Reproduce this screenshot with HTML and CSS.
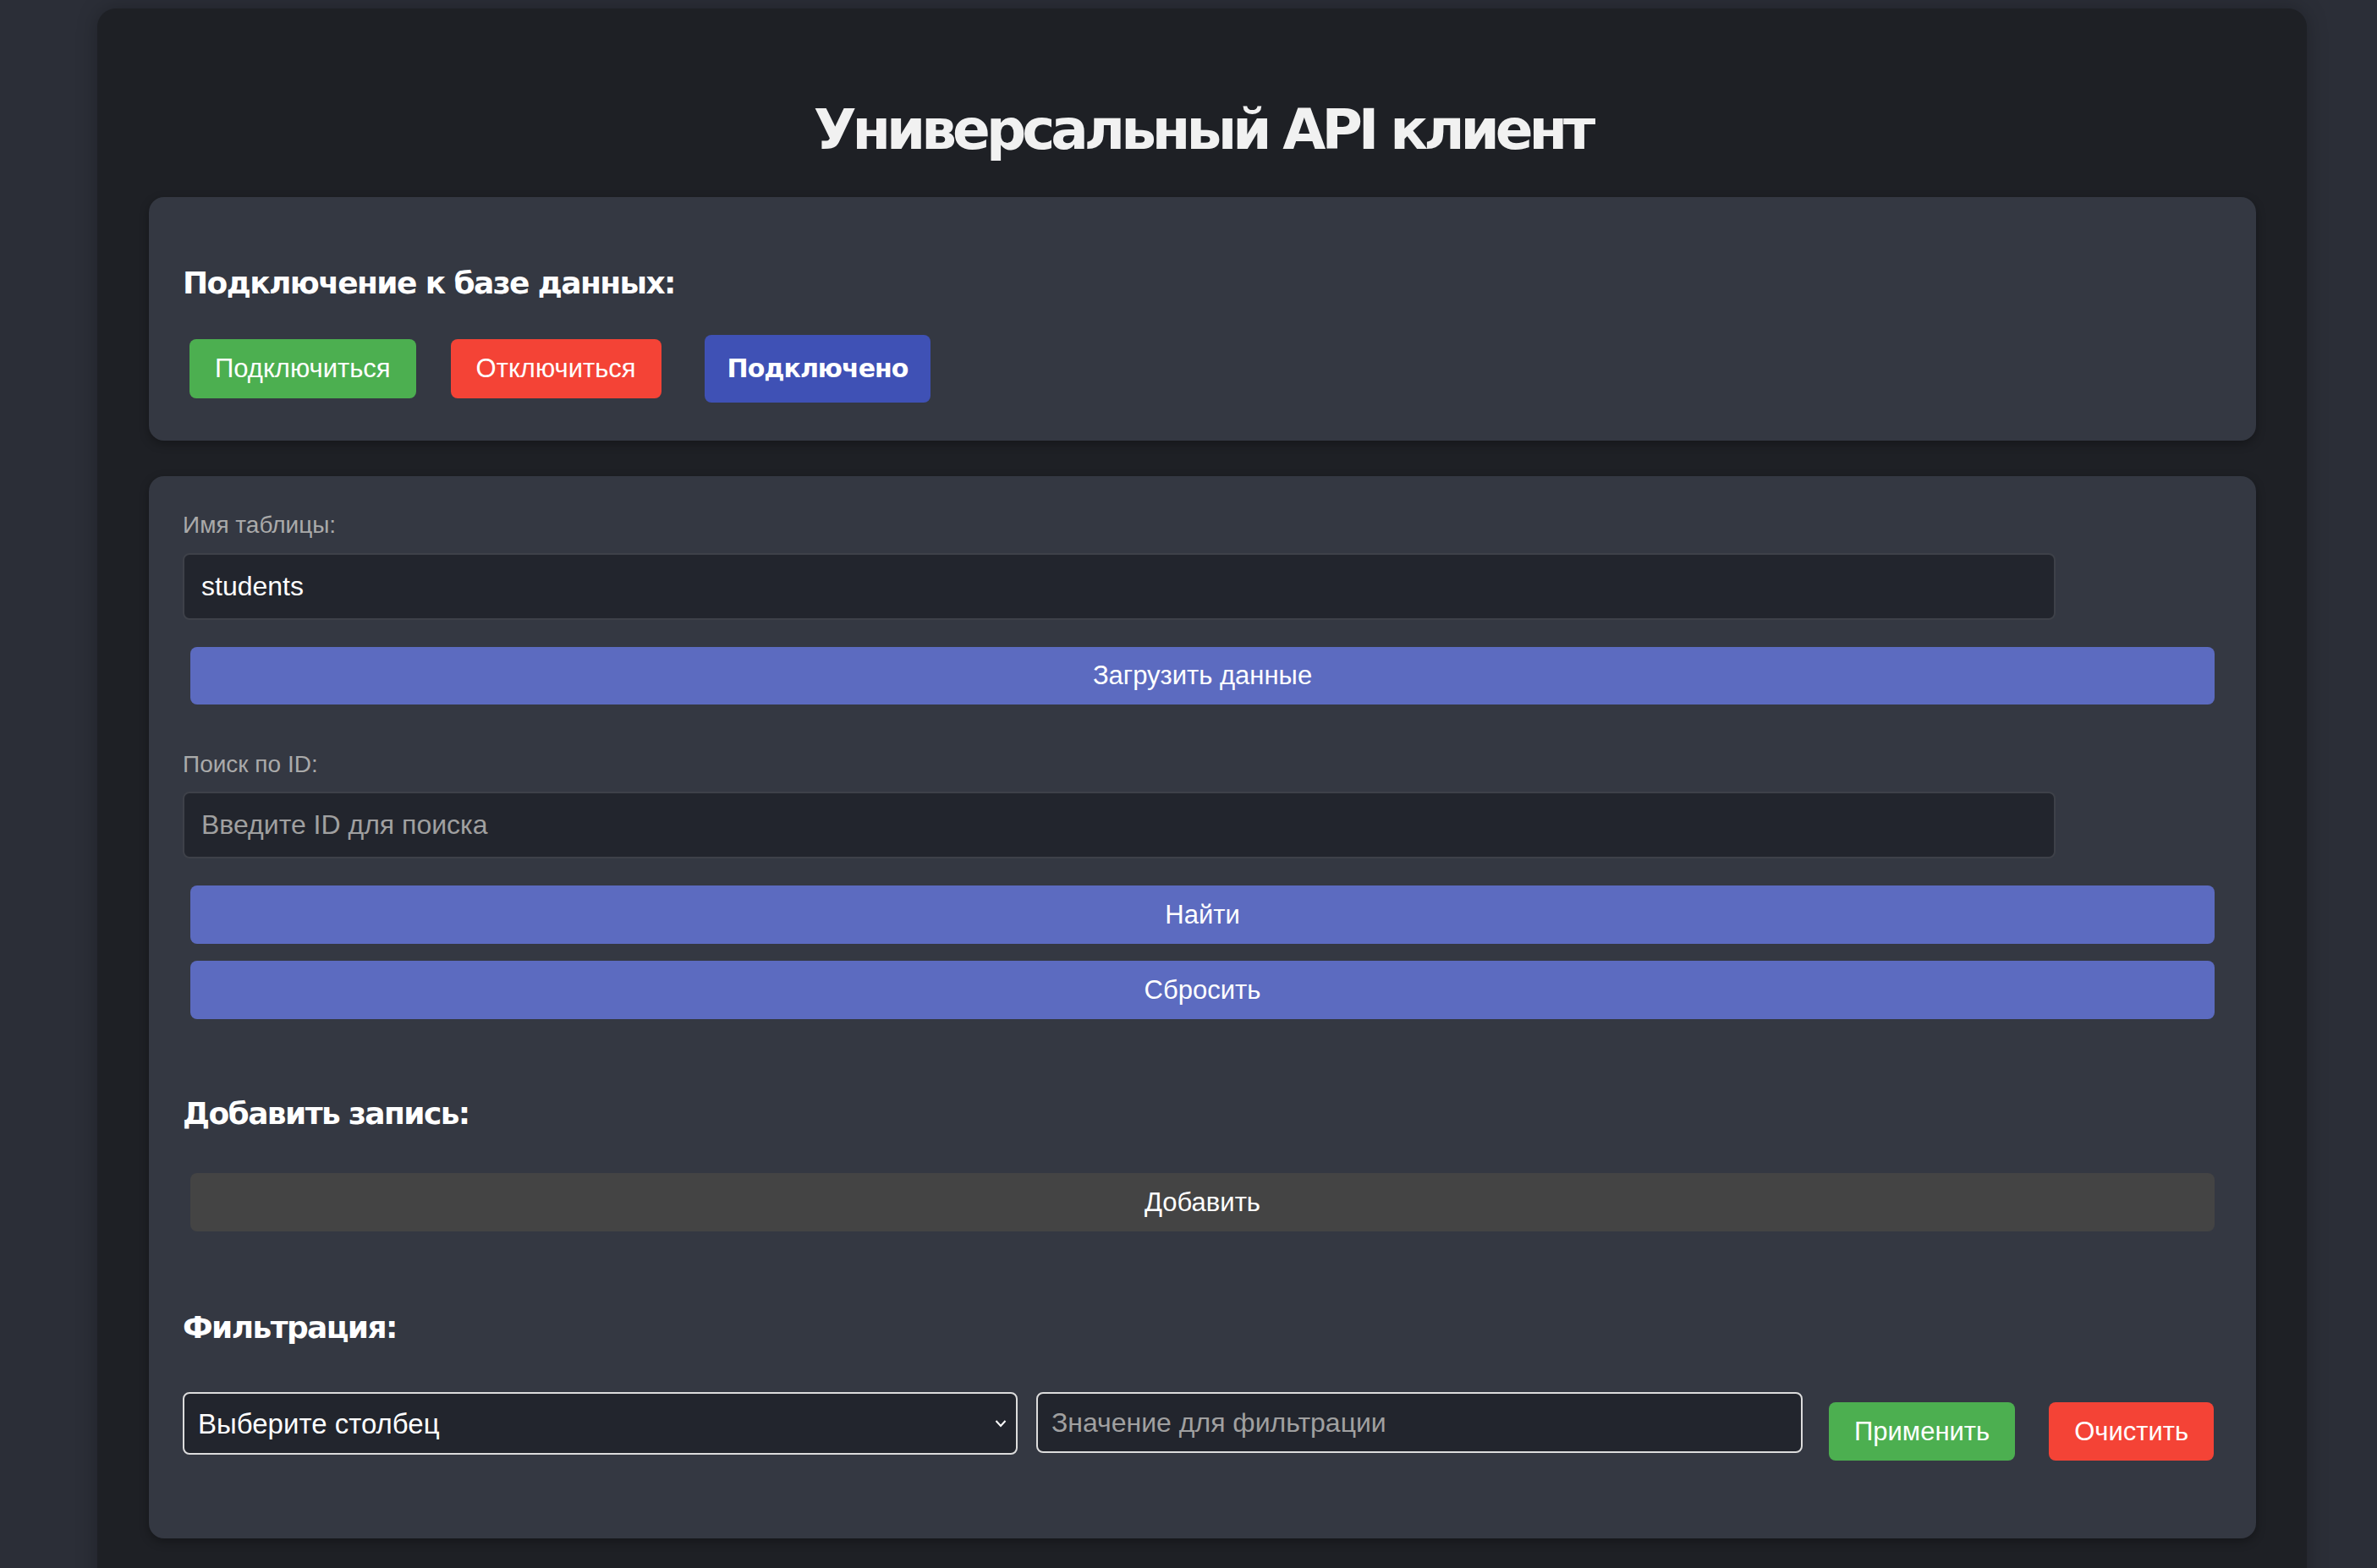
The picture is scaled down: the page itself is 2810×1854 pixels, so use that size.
FILE: index.html
```html
<!DOCTYPE html>
<html lang="ru">
<head>
<meta charset="utf-8">
<title>Универсальный API клиент</title>
<link rel="stylesheet" href="styles.css">
</head>
<body>
<div class="app">
  <h1 class="title">Универсальный API клиент</h1>

  <section class="panel panel-connect">
    <h3 class="heading heading-connect">Подключение к базе данных:</h3>
    <div class="conn-row">
      <button class="btn btn-green btn-connect">Подключиться</button>
      <button class="btn btn-red btn-disconnect">Отключиться</button>
      <span class="status">Подключено</span>
    </div>
  </section>

  <section class="panel panel-main">
    <label class="field-label label-table">Имя таблицы:</label>
    <input class="text-input input-table" type="text" value="students">
    <button class="btn btn-blue btn-wide btn-load">Загрузить данные</button>

    <label class="field-label label-search">Поиск по ID:</label>
    <input class="text-input input-search" type="text" placeholder="Введите ID для поиска">
    <button class="btn btn-blue btn-wide btn-find">Найти</button>
    <button class="btn btn-blue btn-wide btn-reset">Сбросить</button>

    <h3 class="heading heading-add">Добавить запись:</h3>
    <button class="btn btn-gray btn-wide btn-add">Добавить</button>

    <h3 class="heading heading-filter">Фильтрация:</h3>
    <div class="filter-row">
      <div class="select-wrap">
        <select class="filter-select">
          <option>Выберите столбец</option>
        </select>
        <svg class="chevron" width="14" height="10" viewBox="0 0 14 10"><path d="M1.5 2 L7 8 L12.5 2" fill="none" stroke="#ffffff" stroke-width="2"/></svg>
      </div>
      <input class="filter-input" type="text" placeholder="Значение для фильтрации">
      <button class="btn btn-green btn-apply">Применить</button>
      <button class="btn btn-red btn-clear">Очистить</button>
    </div>
  </section>
</div>
</body>
</html>
```

FILE: styles.css
```css
html, body {
  margin: 0;
  padding: 0;
}

body {
  background: #2b2e37;
  font-family: "Liberation Sans", Arial, sans-serif;
  color: #ffffff;
  min-height: 1854px;
  overflow: hidden;
}

.app {
  box-sizing: border-box;
  width: 2612px;
  margin: 10px 0 0 115px;
  padding: 104px 60px 60px 61px;
  background: #1e2025;
  border-radius: 22px;
  box-shadow: 0 0 24px rgba(0, 0, 0, 0.25);
  min-height: 1900px;
}

.title {
  margin: 0 0 39px;
  font-family: "DejaVu Sans", Verdana, sans-serif;
  font-weight: bold;
  font-size: 66px;
  line-height: 80px;
  letter-spacing: -5px;
  text-align: center;
  color: #f1f1f1;
}

.panel {
  background: #343842;
  border-radius: 18px;
  padding: 40px;
  box-shadow: 0 4px 12px rgba(0, 0, 0, 0.3);
}

.panel-connect {
  padding-bottom: 45px;
}

.panel-main {
  margin-top: 42px;
  padding-bottom: 92px;
}

.heading {
  margin: 0;
  font-family: "DejaVu Sans", Verdana, sans-serif;
  font-weight: bold;
  font-size: 36px;
  line-height: 40px;
  letter-spacing: -1.6px;
  color: #ffffff;
}

.heading-connect { margin-top: 42px; }
.heading-add { margin-top: 92px; }
.heading-filter { margin-top: 94px; }

.conn-row {
  display: flex;
  align-items: baseline;
  margin-top: 41px;
}

.btn {
  border: none;
  border-radius: 8px;
  color: #ffffff;
  font-family: "Liberation Sans", Arial, sans-serif;
  font-size: 31px;
  padding: 0 30px;
  height: 69px;
  line-height: 69px;
  cursor: pointer;
}

.btn-green { background: #4caf50; }
.btn-red { background: #f44336; }
.btn-blue { background: #5c6bc0; }
.btn-gray { background: #444444; }

.btn-connect {
  height: 70px;
  line-height: 70px;
  margin-left: 8px;
}

.btn-disconnect {
  height: 70px;
  line-height: 70px;
  margin-left: 41px;
}

.status {
  display: inline-block;
  margin-left: 51px;
  height: 80px;
  line-height: 80px;
  padding: 0 27px;
  border-radius: 8px;
  background: #3f51b5;
  font-family: "DejaVu Sans", Verdana, sans-serif;
  font-weight: bold;
  font-size: 30px;
  letter-spacing: -1px;
  color: #ffffff;
}

.field-label {
  display: block;
  font-size: 28px;
  line-height: 32px;
  color: #aaaaaa;
}

.label-table { margin-top: 2px; }
.label-search { margin-top: 55px; }

.text-input {
  display: block;
  box-sizing: border-box;
  width: 2214px;
  height: 79px;
  padding: 0 20px;
  background: #22252d;
  border: 2px solid #3e4149;
  border-radius: 8px;
  color: #ffffff;
  font-family: "Liberation Sans", Arial, sans-serif;
  font-size: 32px;
  outline: none;
}

.text-input::placeholder,
.filter-input::placeholder {
  color: #a0a0a0;
}

.input-table { margin-top: 17px; }
.input-search { margin-top: 16px; }

.btn-wide {
  display: block;
  box-sizing: border-box;
  width: calc(100% - 18px);
  margin-left: 9px;
  margin-right: 9px;
  text-align: center;
}

.btn-load { margin-top: 32px; height: 68px; line-height: 68px; }
.btn-find { margin-top: 32px; }
.btn-reset { margin-top: 20px; }
.btn-add { margin-top: 50px; }

.filter-row {
  display: flex;
  align-items: flex-start;
  margin-top: 56px;
}

.select-wrap {
  position: relative;
  flex: none;
  width: 987px;
  height: 74px;
  margin-top: 0;
}

.filter-select {
  appearance: none;
  -webkit-appearance: none;
  box-sizing: border-box;
  width: 100%;
  height: 100%;
  padding: 0 16px;
  background: #22252d;
  border: 2px solid #dcdcdc;
  border-radius: 8px;
  color: #ffffff;
  font-family: "Liberation Sans", Arial, sans-serif;
  font-size: 33px;
  outline: none;
}

.chevron {
  position: absolute;
  right: 13px;
  top: 32px;
}

.filter-input {
  flex: none;
  box-sizing: border-box;
  width: 906px;
  height: 72px;
  margin-left: 22px;
  padding: 0 16px;
  background: #22252d;
  border: 2px solid #dcdcdc;
  border-radius: 8px;
  color: #ffffff;
  font-family: "Liberation Sans", Arial, sans-serif;
  font-size: 32px;
  outline: none;
}

.btn-apply {
  flex: none;
  margin-top: 12px;
  margin-left: 31px;
}

.btn-clear {
  flex: none;
  margin-top: 12px;
  margin-left: 40px;
}
```
